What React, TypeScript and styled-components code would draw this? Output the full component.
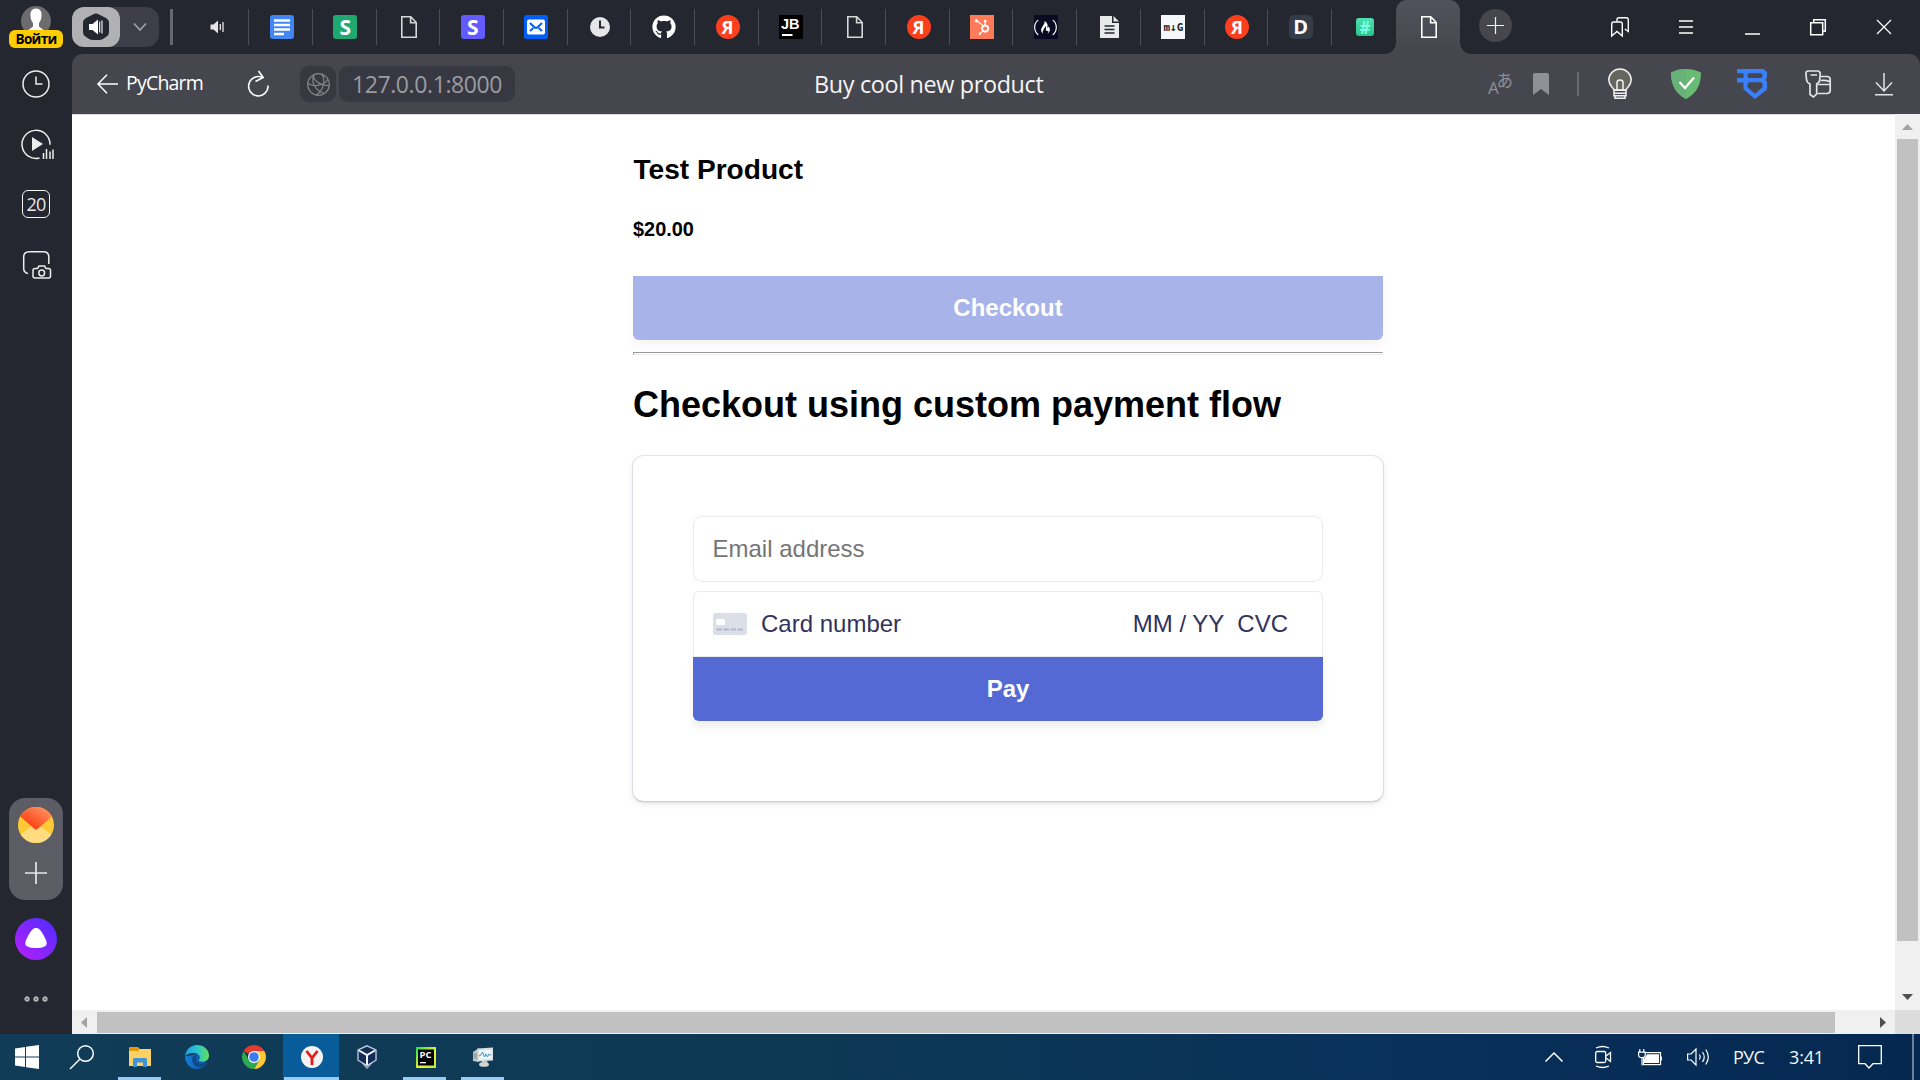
import React from "react";
import styled, { createGlobalStyle, css } from "styled-components";
import { FaGithub, FaHubspot, FaFreeCodeCamp } from "react-icons/fa";

const GlobalStyle = createGlobalStyle`
  *, *::before, *::after { box-sizing: border-box; }
  body { margin: 0; background: #242730; overflow: hidden; }
  svg { display: block; flex: none; overflow: visible; }
`;

const uiFont = css`
  font-family: "Open Sans", "Noto Sans", sans-serif;
`;

const Screen = styled.div`
  width: 1920px;
  height: 1080px;
  display: flex;
  flex-direction: column;
  background: #242730;
  ${uiFont}
`;

const Browser = styled.div`
  height: 1034px;
  display: flex;
`;

/* ---------- sidebar ---------- */

const Sidebar = styled.aside`
  width: 72px;
  display: flex;
  flex-direction: column;
  align-items: center;
  background: #242730;
`;

const Profile = styled.div`
  height: 54px;
  padding-top: 6px;
  display: flex;
  flex-direction: column;
  align-items: center;
`;

const LoginBadge = styled.div`
  width: 54px;
  height: 18px;
  margin-top: -6px;
  border-radius: 6px;
  background: #ffcc00;
  color: #000;
  font-size: 13.5px;
  line-height: 19px;
  font-weight: 700;
  letter-spacing: -0.7px;
  text-align: center;
  z-index: 1;
`;

const SideCell = styled.div<{ $h?: number }>`
  width: 72px;
  height: ${(p) => p.$h ?? 60}px;
  display: flex;
  align-items: center;
  justify-content: center;
`;

const CalendarBox = styled.div`
  width: 28px;
  height: 28px;
  border: 1.5px solid #f2f2f3;
  border-radius: 6px;
  color: #e8e8ea;
  font-size: 18px;
  line-height: 27px;
  text-align: center;
  letter-spacing: -0.8px;
`;

const ServicePill = styled.div`
  width: 54px;
  height: 102px;
  margin-top: auto;
  padding: 9px 0 16px;
  border-radius: 16px;
  background: #5b5c64;
  display: flex;
  flex-direction: column;
  align-items: center;
  justify-content: space-between;
`;

/* ---------- window chrome ---------- */

const Window = styled.div`
  flex: 1;
  display: flex;
  flex-direction: column;
`;

const TabStrip = styled.div`
  height: 54px;
  display: flex;
  align-items: center;
`;

const TabGroup = styled.div`
  width: 87px;
  height: 40px;
  border-radius: 13px;
  background: #3d3e48;
  display: flex;
  align-items: center;
`;

const GroupFace = styled.div`
  width: 48px;
  height: 40px;
  border-radius: 12px;
  background: #b1b1b4;
  display: flex;
  align-items: center;
  justify-content: center;
  margin-right: 13px;
`;

const GroupBar = styled.div`
  width: 3px;
  height: 36px;
  margin: 0 12.5px 0 11px;
  background: #66676f;
`;

const Tab = styled.div<{ $last?: boolean }>`
  width: 63.7px;
  height: 36px;
  padding-left: 2.4px;
  display: flex;
  align-items: center;
  justify-content: center;
  border-right: ${(p) => (p.$last ? "none" : "1.5px solid #4c4e57")};
`;

const ActiveTab = styled.div`
  position: relative;
  width: 64px;
  height: 54px;
  padding-left: 2px;
  border-radius: 11px 11px 0 0;
  background: linear-gradient(#52525c, #46464f);
  display: flex;
  align-items: center;
  justify-content: center;
  &::before,
  &::after {
    content: "";
    position: absolute;
    bottom: 0;
    width: 11px;
    height: 11px;
  }
  &::before {
    left: -11px;
    background: radial-gradient(circle at 0 0, transparent 10.5px, #46464f 11px);
  }
  &::after {
    right: -11px;
    background: radial-gradient(circle at 100% 0, transparent 10.5px, #46464f 11px);
  }
`;

const NewTab = styled.div`
  width: 33px;
  height: 33px;
  margin: 0 auto 3px 19px;
  border-radius: 50%;
  background: #46464f;
  display: flex;
  align-items: center;
  justify-content: center;
`;

const IconRun = styled.div`
  display: flex;
  align-items: center;
  padding-right: 3px;
`;

const IconCell = styled.div<{ $w?: number }>`
  width: ${(p) => p.$w ?? 66}px;
  display: flex;
  align-items: center;
  justify-content: center;
`;

const Toolbar = styled.div`
  height: 60px;
  border-radius: 11px 11px 0 0;
  background: #46464f;
  display: flex;
  align-items: center;
  padding-left: 25px;
`;

const BackLabel = styled.span`
  width: 119px;
  padding-left: 8px;
  color: #fff;
  font-size: 19.5px;
  line-height: 28px;
  letter-spacing: -0.8px;
  margin-bottom: 2px;
`;

const Site = styled.div<{ $w: number }>`
  width: ${(p) => p.$w}px;
  height: 36px;
  border-radius: 9px;
  background: #373841;
  color: #9b9ba1;
  display: flex;
  align-items: center;
  justify-content: center;
  font-size: 23px;
  letter-spacing: -0.4px;
  white-space: nowrap;
  margin-right: 3px;
`;

const PageTitle = styled.div`
  flex: 1;
  padding: 0 140px 0 0;
  color: #f4f4f5;
  font-size: 23.4px;
  letter-spacing: -0.35px;
  text-align: center;
`;

const ToolDivider = styled.div`
  width: 1.5px;
  height: 24px;
  margin: 0 8.5px 0 15.5px;
  background: #6b6b73;
`;

/* ---------- page area ---------- */

const View = styled.div`
  flex: 1;
  display: grid;
  grid-template-columns: 1fr 25px;
  grid-template-rows: 1fr 24px;
  background: #fff;
`;

const Page = styled.main`
  padding: 39px 0 0 561px;
  border-top: 1px solid #dcdcde;
  font-family: Arial, "Liberation Sans", sans-serif;
  color: #000;
`;

const Column = styled.div`
  width: 750px;
  display: flex;
  flex-direction: column;
`;

const ProductName = styled.h3`
  margin: 0 0 0 0.5px;
  font-size: 28.08px;
  line-height: 32px;
`;

const Price = styled.h5`
  margin: 32px 0 0;
  font-size: 19.92px;
  line-height: 23px;
`;

const SolidButton = styled.button<{ $faded?: boolean }>`
  width: 100%;
  height: 64px;
  flex: none;
  padding: 0;
  border: 0;
  border-radius: 0 0 6px 6px;
  background: #5469d4;
  color: #fff;
  font: 700 24px Arial, "Liberation Sans", sans-serif;
  box-shadow: 0 6px 8.25px rgba(0, 0, 0, 0.07);
  opacity: ${(p) => (p.$faded ? 0.5 : 1)};
`;

const CheckoutSlot = styled.div`
  height: 64px;
  margin-top: 35px;
`;

const Rule = styled.hr`
  width: 100%;
  height: 3px;
  margin: 12px 0 0;
  border: 1px solid;
  border-color: #9a9a9a #eee #eee #9a9a9a;
`;

const Heading = styled.h1`
  margin: 29px 0 31px;
  font-size: 36px;
  line-height: 41px;
`;

const PaymentForm = styled.form`
  height: 345px;
  padding: 60px 60px 0;
  border-radius: 10.5px;
  box-shadow: 0 0 0 1px rgba(50, 50, 93, 0.1), 0 3px 7.5px rgba(50, 50, 93, 0.1),
    0 1.5px 2.25px rgba(0, 0, 0, 0.07);
  display: flex;
  flex-direction: column;
`;

const EmailInput = styled.input`
  width: 100%;
  height: 66px;
  flex: none;
  margin: 0 0 9px;
  padding: 0 18.5px;
  border: 1px solid rgba(50, 50, 93, 0.1);
  border-radius: 9px;
  background: #fff;
  font: 24px Arial, "Liberation Sans", sans-serif;
  outline: none;
  &::placeholder {
    color: #757575;
    opacity: 1;
  }
`;

const CardField = styled.div`
  height: 66px;
  flex: none;
  padding: 0 34px 1px 19px;
  border: 1px solid rgba(50, 50, 93, 0.1);
  border-radius: 6px 6px 0 0;
  display: flex;
  align-items: center;
  color: #32325d;
  font-size: 24px;
  line-height: 28px;
`;

const CardNumber = styled.span`
  margin-left: 14px;
  flex: 1;
`;

const Expiry = styled.span`
  margin-right: 13px;
`;

const VScroll = styled.div`
  background: #f0f0f0;
  display: flex;
  flex-direction: column;
  align-items: center;
`;

const HScroll = styled.div`
  background: #f0f0f0;
  display: flex;
  align-items: center;
`;

const ScrollArrow = styled.div<{ $w: number; $h: number }>`
  width: ${(p) => p.$w}px;
  height: ${(p) => p.$h}px;
  display: flex;
  align-items: center;
  justify-content: center;
`;

const VThumb = styled.div`
  width: 21px;
  height: 802px;
  background: #c1c1c1;
  margin-bottom: auto;
`;

const HThumb = styled.div`
  width: 1738px;
  height: 21px;
  background: #c1c1c1;
  margin-right: auto;
`;

const Corner = styled.div`
  background: #dcdcdc;
`;

/* ---------- taskbar ---------- */

const Taskbar = styled.div`
  height: 46px;
  display: flex;
  background: linear-gradient(90deg, #103c57 0%, #0e3954 40%, #08305a 75%, #052850 100%);
`;

const TaskItem = styled.div<{ $w?: number; $active?: boolean; $open?: boolean }>`
  width: ${(p) => p.$w ?? 57}px;
  height: 46px;
  padding: 0 ${(p) => (p.$active ? 0 : 7)}px;
  display: flex;
  align-items: center;
  justify-content: center;
  background: ${(p) => (p.$active ? "#075c99" : "transparent")};
  background-clip: content-box;
  &::after {
    content: "";
    display: ${(p) => (p.$open ? "block" : "none")};
    flex: none;
    align-self: flex-end;
    width: ${(p) => (p.$active ? 55 : 43)}px;
    height: 3px;
    margin-left: -100%;
    background: #9acbf2;
  }
`;

const TaskGlyph = styled.div`
  flex: none;
  width: 100%;
  display: flex;
  justify-content: center;
`;

const Tray = styled.div`
  margin-left: auto;
  padding-right: 6px;
  display: flex;
  align-items: center;
`;

const TrayText = styled.span<{ $w: number; $sp?: number }>`
  width: ${(p) => p.$w}px;
  color: #f2f5f8;
  text-align: center;
  font-size: 18px;
  letter-spacing: ${(p) => p.$sp ?? -0.7}px;
`;

const DesktopEdge = styled.div`
  width: 2px;
  height: 46px;
  margin-left: 11px;
  background: #67819b;
`;

/* ---------- icons ---------- */

type GlyphProps = {
  w: number;
  h: number;
  c?: string;
  s?: number;
  children: React.ReactNode;
};

const Glyph = ({ w, h, c = "#fff", s = 1.5, children }: GlyphProps) => (
  <svg width={w} height={h} viewBox={`0 0 ${w} ${h}`} fill="none" stroke={c} strokeWidth={s}>
    {children}
  </svg>
);

const Tile = styled.div<{ $bg: string; $fg?: string; $size?: number; $r?: number; $font?: string; $h?: number }>`
  width: ${(p) => p.$h ?? 24}px;
  height: ${(p) => p.$h ?? 24}px;
  border-radius: ${(p) => p.$r ?? 0}px;
  background: ${(p) => p.$bg};
  color: ${(p) => p.$fg ?? "#fff"};
  font: 700 ${(p) => p.$size ?? 18}px/1 ${(p) => p.$font ?? '"Open Sans", sans-serif'};
  display: flex;
  align-items: center;
  justify-content: center;
`;

const Speaker = () => (
  <Glyph w={16} h={14} c="#e6e6e8" s={1.3}>
    <path d="M.5 4.500h3L8 .5v13l-4.500-4h-3z" fill="#e6e6e8" stroke="none" />
    <path d="M10.300 4v6M13 2v10" />
  </Glyph>
);

const FileIcon = ({ color = "#d6d6d8" }: { color?: string }) => (
  <Glyph w={16} h={22} c={color} s={1.6}>
    <path d="M.8.8h9l5.400 5.700v14.700H.8zM9.600 1v5.700H15" />
  </Glyph>
);

const Yandex = () => (
  <Tile $bg="#fc3f1d" $r={12} $size={18}>Я</Tile>
);

const ClockFilled = () => (
  <Glyph w={20} h={20} c="#242730" s={2}>
    <circle cx="10" cy="10" r="10" fill="#e6e6e8" stroke="none" />
    <path d="M10 3.500v7h4.500" />
  </Glyph>
);

const tabs: React.ReactNode[] = [
  <Speaker key="sp" />,
  <Glyph key="docs" w={24} h={24} c="#fff" s={2.4}>
    <rect width="24" height="24" rx="3" fill="#4285f4" stroke="none" />
    <path d="M4 5.500h16M4 10h16M4 14.500h16M4 19h10" />
  </Glyph>,
  <Tile key="s1" $bg="#1fa971" $r={3} $size={21}>S</Tile>,
  <FileIcon key="f1" />,
  <Tile key="s2" $bg="#635bff" $r={3} $size={21}>S</Tile>,
  <Glyph key="mail" w={24} h={24} c="#005ff9" s={2}>
    <rect width="24" height="24" rx="2.500" fill="#005ff9" stroke="none" />
    <rect x="3" y="4.500" width="18" height="15" rx="2" fill="#fff" stroke="none" />
    <path d="M6 8l4.200 4c1 1 2.600 1 3.600 0L18 8M6 16l3.300-3M18 16l-3.300-3" />
  </Glyph>,
  <ClockFilled key="clock" />,
  <FaGithub key="gh" size={24} color="#fff" />,
  <Yandex key="y1" />,
  <svg key="jb" width="24" height="24" viewBox="0 0 24 24">
    <rect width="24" height="24" fill="#000" />
    <text x="2" y="13.500" fontFamily="Liberation Sans, sans-serif" fontWeight="700" fontSize="14.500" fill="#fff">JB</text>
    <rect x="3" y="19" width="10.500" height="2" fill="#fff" />
  </svg>,
  <FileIcon key="f2" />,
  <Yandex key="y2" />,
  <Tile key="hs" $bg="#ff7a59"><FaHubspot size={16} /></Tile>,
  <Tile key="fc" $bg="#0a0a23"><FaFreeCodeCamp size={23} /></Tile>,
  <Glyph key="doc" w={19} h={22} c="#242730" s={1.7}>
    <path d="M0 0h12v7h7v15H0z" fill="#e9e9ea" stroke="none" />
    <path d="M13.500 0L19 5.500h-5.500z" fill="#e9e9ea" stroke="none" />
    <path d="M4.500 10h10M4.500 13.500h10M4.500 17h10" />
  </Glyph>,
  <Tile key="mg" $bg="#f6f7fa" $fg="#1d2433" $size={11} $font='"DejaVu Sans Mono", monospace'>m↓G</Tile>,
  <Yandex key="y3" />,
  <Tile key="d" $bg="#363b48" $r={5} $size={20}>D</Tile>,
  <Tile key="hash" $bg="linear-gradient(#4fe0b0, #27c48d)" $fg="#7dffe6" $r={3} $size={17} $h={18}>#</Tile>,
];

const Avatar = () => (
  <svg width="30" height="30" viewBox="0 0 30 30">
    <circle cx="15" cy="15" r="15" fill="#6c6c6d" />
    <path d="M15 2.500c-4 0-6 3-5.500 7.500.2 3 1 5 2.500 7v3.500L6 25l3 5h12l3-5-6-4.500V17c1.500-2 2.300-4 2.500-7C21 5.500 19 2.500 15 2.500z" fill="#fff" />
  </svg>
);

const Win = () => (
  <svg width="24" height="24" viewBox="0 0 24 24" fill="#fff">
    <path d="M0 3.400L10 2v9.500H0zM11 1.800L24 0v11.500H11zM0 12.500h10V22L0 20.600zM11 12.500h13V24l-13-1.800z" />
  </svg>
);

const Explorer = () => (
  <svg width="22" height="20" viewBox="0 0 22 20">
    <path d="M0 1q0-1 1-1h8l2 2v4H0z" fill="#e39b0c" />
    <path d="M0 4h9l2-2h11v17H0z" fill="#fdd264" />
    <path d="M4 20v-7.500q0-1.500 1.500-1.500h11q1.500 0 1.500 1.500V20h-4v-4.500H8V20z" fill="#3f93d8" />
  </svg>
);

const Edge = () => (
  <svg width="24" height="24" viewBox="0 0 24 24">
    <defs>
      <linearGradient id="edgeTop" x1="0" x2="1"><stop offset="0" stopColor="#1f9be6" /><stop offset=".5" stopColor="#2cc3d2" /><stop offset="1" stopColor="#62df58" /></linearGradient>
      <linearGradient id="edgeLow" x1="0" x2="1"><stop offset="0" stopColor="#1380d8" /><stop offset="1" stopColor="#0b4c98" /></linearGradient>
    </defs>
    <path d="M0 11.500C0 18 5 24 12 24c4.500 0 8.500-2.300 10.500-6L13 14l4-6z" fill="url(#edgeLow)" />
    <path d="M0 11.500C.5 5 5.500 0 12 0c7 0 12 5 12 10.500 0 4-3 6.300-6.500 6.300-3 0-4.300-1.300-3.500-2.300 1.800-2.500 0-6.500-4.500-6.500C5 8 1 9.500 0 11.500z" fill="url(#edgeTop)" />
    <path d="M9 10c-4 4-1.500 11.500 5 12 4 .3 7-1.700 8.500-4.500-4 2-8.500 1.500-10.500-1-1.500-2-1-4.500.500-6z" fill="#114a8b" />
  </svg>
);

const Chrome = () => (
  <svg width="24" height="24" viewBox="0 0 24 24">
    <path d="M12 12L1.610 6A12 12 0 0 1 22.390 6z" fill="#e33b2e" />
    <path d="M12 6H22.390A12 12 0 0 1 12 24l5.200-9z" fill="#fcc934" />
    <path d="M6.800 15L1.610 6A12 12 0 0 0 12 24l5.200-9-5.200 3z" fill="#2da94f" />
    <circle cx="12" cy="12" r="6" fill="#fff" />
    <circle cx="12" cy="12" r="4.800" fill="#3b7ded" />
  </svg>
);

const YandexBrowser = () => (
  <svg width="22" height="22" viewBox="0 0 22 22">
    <circle cx="11" cy="11" r="11" fill="#f3f3f4" />
    <path d="M5.500 5l5.500 7 5.500-7M11 11.500V19" stroke="#e21a1a" strokeWidth="2.800" fill="none" />
  </svg>
);

const VirtualBox = () => (
  <svg width="20" height="24" viewBox="0 0 20 24">
    <path d="M5 18l5 5.500 5-5.500z" fill="#8191ad" stroke="#b8c3d6" />
    <path d="M10 .8l9 4v10.400L10 20.500l-9-5.300V4.800z" fill="#142b58" stroke="#c5cfdf" strokeWidth="1.300" />
    <path d="M2 5.500l8 4.500 8-4.500M10 10v10" stroke="#f2f5fa" strokeWidth="2" fill="none" />
  </svg>
);

const PyCharm = () => (
  <svg width="20" height="21" viewBox="0 0 20 21">
    <defs><linearGradient id="pc" x1="0" y1="0" x2="1" y2="1"><stop offset="0" stopColor="#21d75f" /><stop offset=".25" stopColor="#7eea3a" /><stop offset=".6" stopColor="#f4f03c" /><stop offset="1" stopColor="#b6e83e" /></linearGradient></defs>
    <rect width="20" height="21" fill="url(#pc)" />
    <rect x="2" y="2.500" width="16" height="16" fill="#000" />
    <text x="3.600" y="10.500" fontFamily="Open Sans, sans-serif" fontWeight="700" fontSize="9.500" fill="#fff">PC</text>
    <rect x="4" y="15" width="6" height="1.300" fill="#fff" />
  </svg>
);

const Monitor = () => (
  <svg width="22" height="20" viewBox="0 0 22 20">
    <path d="M1 5l6-4v14l-6-1z" fill="#c2c6c8" />
    <path d="M1.500 7h4M1.500 9h4M1.500 11h4" stroke="#7d8488" />
    <path d="M5.500 1.500L21 .5v13l-15.500 1z" fill="#d8dde0" />
    <path d="M7 3.300l12.500-.8v9.500l-12.500.8z" fill="#eef5f9" />
    <path d="M7 9l2-1 1.500-3 2 5 1.500-3 1.500 3L17 7l2 1.500" stroke="#3d92bd" fill="none" />
    <path d="M10 14h5l1 2.500h-7z" fill="#bfc4c7" />
    <ellipse cx="12" cy="17.500" rx="5" ry="2.300" fill="#d2d5d6" />
  </svg>
);

const ShieldB = () => (
  <svg width="30" height="30" viewBox="0 0 30 30">
    <path
      fillRule="evenodd"
      fill="#3a80fa"
      d="M0 0h26.500L30 3.300v5l-1.500 2.400L30 13v7.500L18 30 6.500 20.500v-7H0V9h6.500V4.200H0zM12 4.200q-1.500 0-1.500 2.300T12 9h12q1.500 0 1.500-2.500T24 4.200zM12 13.200l-1.500 1.500v3.600l7.500 6.500 7.500-6.500v-3.600L24 13.200z"
    />
  </svg>
);

export default function App() {
  return (
    <Screen>
      <GlobalStyle />
      <Browser>
        <Sidebar>
          <Profile>
            <Avatar />
            <LoginBadge>Войти</LoginBadge>
          </Profile>
          <SideCell>
            <Glyph w={28} h={28} c="#ededee">
              <circle cx="14" cy="14" r="13" />
              <path d="M14 6.500V14h6.500" />
            </Glyph>
          </SideCell>
          <SideCell>
            <Glyph w={30} h={30} c="#ededee">
              <path d="M18.500 28.900A14 14 0 1 1 29 15.700" />
              <path d="M11 8l11 7-11 7z" fill="#ededee" stroke="none" />
              <path d="M22.500 24v6M25.500 20v10M29 22.500v7.500M32 20.500v9.500" />
            </Glyph>
          </SideCell>
          <SideCell>
            <CalendarBox>20</CalendarBox>
          </SideCell>
          <SideCell>
            <Glyph w={27} h={27} c="#ededee">
              <path d="M5 22.500Q.7 21.500 .7 17.500V6Q.7.7 6 .7h14.500q5.300 0 5.300 5.300v7" />
              <path d="M12 17.500h2.500L16 15h5.500l1.500 2.500h2.500q2 0 2 2V25q0 2-2 2H12q-2 0-2-2v-5.500q0-2 2-2z" />
              <circle cx="18.700" cy="22" r="2.900" />
            </Glyph>
          </SideCell>
          <ServicePill>
            <svg width="36" height="36" viewBox="0 0 36 36">
              <defs>
                <clipPath id="disc"><circle cx="18" cy="18" r="18" /></clipPath>
                <linearGradient id="flap" x1="0" y1="1" x2="1" y2="0"><stop offset=".3" stopColor="#ff4a1c" /><stop offset="1" stopColor="#ffa070" /></linearGradient>
              </defs>
              <g clipPath="url(#disc)">
                <rect width="36" height="36" fill="#fdc935" />
                <path d="M0 29.500L18 16l18 13.500V36H0z" fill="#ffdc80" />
                <path d="M0 7.500l16.500 14.500q1.500 1.300 3 0L36 7.500V0H0z" fill="url(#flap)" />
              </g>
            </svg>
            <Glyph w={22} h={22} c="#e6e6e8" s={1.7}>
              <path d="M11 0v22M0 11h22" />
            </Glyph>
          </ServicePill>
          <SideCell $h={78}>
            <svg width="42" height="42" viewBox="0 0 42 42">
              <defs><linearGradient id="alice" x1="0" y1="1" x2="1" y2="0"><stop offset="0" stopColor="#b91fff" /><stop offset="1" stopColor="#4b2dff" /></linearGradient></defs>
              <circle cx="21" cy="21" r="21" fill="url(#alice)" />
              <path d="M21 10c3 0 5 2.500 8 8 3.500 6.500 3.500 9 .5 10.500-4 2-13 2-17 0-3-1.500-3-4 .5-10.500 3-5.500 5-8 8-8z" fill="#fff" />
            </svg>
          </SideCell>
          <SideCell $h={42}>
            <Glyph w={24} h={6} c="#b4b5b9" s={1.900}>
              <circle cx="3" cy="3" r="1.700" /><circle cx="12" cy="3" r="1.700" /><circle cx="21" cy="3" r="1.700" />
            </Glyph>
          </SideCell>
          <SideCell $h={14} />
        </Sidebar>

        <Window>
          <TabStrip>
            <TabGroup>
              <GroupFace>
                <svg width="26" height="28" viewBox="0 0 26 28">
                  <path d="M10 1.400q3-1.700 6 0l6.500 3.400Q26 6.500 26 10v9q0 3.500-3.500 5.300L20 26q-2 1-4 1h-6q-2 0-4-1l-2.500-1.700Q0 22.500 0 19v-9q0-3.500 3.500-5.200z" fill="#242730" />
                  <path d="M6 11h3.500L15 6.500v15L9.500 17H6z" fill="#fff" />
                  <path d="M16.700 8.500v11M19 7.500v13" stroke="#fff" strokeWidth="1.100" />
                </svg>
              </GroupFace>
              <Glyph w={14} h={8} c="#9c9ca3" s={1.8}><path d="M1 .5l6 6.500 6-6.500" /></Glyph>
            </TabGroup>
            <GroupBar />
            {tabs.map((icon, i) => (
              <Tab key={i} $last={i === tabs.length - 1}>{icon}</Tab>
            ))}
            <ActiveTab><FileIcon color="#fff" /></ActiveTab>
            <NewTab>
              <Glyph w={17} h={17} c="#f2f2f3" s={1.200}><path d="M8.500 0v17M0 8.500h17" /></Glyph>
            </NewTab>
            <IconRun>
              <IconCell>
                <Glyph w={18} h={20} s={1.400}>
                  <path d="M.7 19V7q0-2 2-2h6.600q2 0 2 2v12L6 14.500z" />
                  <path d="M6 4.500V2.700q0-2 2-2h7.300q2 0 2 2V14.500l-3.500-2.500" />
                </Glyph>
              </IconCell>
              <IconCell><Glyph w={14} h={14}><path d="M0 1h14M0 7h14M0 13h14" /></Glyph></IconCell>
              <IconCell><Glyph w={15} h={16}><path d="M0 15h15" /></Glyph></IconCell>
              <IconCell><Glyph w={16} h={16}><path d="M.7 3.700h12v12H.7zM3.700 3V.7h11.600v11.600H13" /></Glyph></IconCell>
              <IconCell><Glyph w={14} h={14} s={1.200}><path d="M0 0l14 14M14 0L0 14" /></Glyph></IconCell>
            </IconRun>
          </TabStrip>

          <Toolbar>
            <Glyph w={21} h={20}><path d="M21 10H1M10 .7L1 10l9 9.300" /></Glyph>
            <BackLabel>PyCharm</BackLabel>
            <IconCell $w={41}>
              <Glyph w={22} h={26} s={1.600}>
                <path d="M21 14.500A9.700 9.700 0 1 1 15.500 6.500" />
                <path d="M11.500 0l4.700 6.500-7.700 4" />
              </Glyph>
            </IconCell>
            <IconCell $w={22} />
            <Site $w={36}>
              <Glyph w={23} h={23} c="#85858c" s={1.2}>
                <circle cx="11.500" cy="11.500" r="10.800" />
                <path d="M7 1.700C3.500 8 8 18 17.500 20.500M14.500 1.200C19 6 17 17 9 22M1 9.500C4 14.500 17 13 21 6.500M7 1.700C5 6 12 12.500 22.300 12.500" />
              </Glyph>
            </Site>
            <Site $w={176}>127.0.0.1:8000</Site>
            <PageTitle>Buy cool new product</PageTitle>
            <IconRun>
              <IconCell $w={41}>
                <svg width="24" height="24" viewBox="0 0 24 24" fill="#909096">
                  <text x="0" y="22" fontFamily="Open Sans, sans-serif" fontSize="17">A</text>
                  <text x="8.500" y="14.500" fontFamily="Noto Sans CJK JP, sans-serif" fontSize="16.500">あ</text>
                </svg>
              </IconCell>
              <IconCell $w={41}>
                <svg width="16" height="22" viewBox="0 0 16 22"><path d="M0 2q0-2 2-2h12q2 0 2 2v20l-8-6-8 6z" fill="#909096" /></svg>
              </IconCell>
              <ToolDivider />
              <IconCell>
                <Glyph w={24} h={30} c="#f2f2f3" s={1.500}>
                  <path d="M6 21C5 18.500.8 16.500.8 11a11.200 11 0 0 1 22.400 0c0 5.500-4.200 7.500-5.200 10z" fill="#66665f" />
                  <path d="M9 21v-7.500q0-2.500 3-2.500t3 2.500V21M6 21.200h12v3H6zM6 24.200v2.500h12v-2.500M7 26.700h10v2.500H7z" />
                </Glyph>
              </IconCell>
              <IconCell>
                <svg width="30" height="30" viewBox="0 0 30 30">
                  <path d="M15 0c5 0 10 1 15 3.500 0 12-4 20.500-15 26.500C4 24 0 15.500 0 3.500 5 1 10 0 15 0z" fill="#68bc71" />
                  <path d="M15 0v30C4 24 0 15.500 0 3.500 5 1 10 0 15 0z" fill="#67b279" />
                  <path d="M8.500 13l5.500 6 9-10.500" stroke="#fff" strokeWidth="2.200" fill="none" />
                </svg>
              </IconCell>
              <IconCell><ShieldB /></IconCell>
              <IconCell>
                <Glyph w={26} h={28} c="#e4e4e6" s={1.700}>
                  <path d="M3.500 1h9q2.700 0 2.700 2.700L14.700 10q-.2 2.700-3 3.800v10L8.500 27 5 24.500V14Q2 12.800 1.600 10L.9 3.700Q.9 1 3.500 1zM5.500 5h6.500" />
                  <path d="M16 6.500h6q3.200 0 3.200 3.200v10.600q0 3.200-3.200 3.200h-9.500M15.500 10.500q6-.5 9 1M12.500 14.500H25" />
                </Glyph>
              </IconCell>
              <IconCell><Glyph w={18} h={24} c="#e4e4e6"><path d="M9 1v18M1 10.500l8 8.500 8-8.500M0 22.700h18" /></Glyph></IconCell>
            </IconRun>
          </Toolbar>

          <View>
            <Page>
              <Column>
                <ProductName>Test Product</ProductName>
                <Price>$20.00</Price>
                <CheckoutSlot><SolidButton $faded>Checkout</SolidButton></CheckoutSlot>
                <Rule />
                <Heading>Checkout using custom payment flow</Heading>
                <PaymentForm>
                  <EmailInput placeholder="Email address" />
                  <CardField>
                    <svg width="34" height="22" viewBox="0 0 34 22">
                      <rect width="34" height="22" rx="2.500" fill="#dcdfe8" />
                      <rect x="3.300" y="6" width="8.700" height="6" rx="1" fill="#fff" />
                      <path d="M3.500 16.500h5.500M10.500 16.500H16M17.500 16.500H23M24.500 16.500H30" stroke="#b9bfcd" strokeWidth="2.400" />
                    </svg>
                    <CardNumber>Card number</CardNumber>
                    <Expiry>MM / YY</Expiry>
                    <span>CVC</span>
                  </CardField>
                  <SolidButton type="button">Pay</SolidButton>
                </PaymentForm>
              </Column>
            </Page>
            <VScroll>
              <ScrollArrow $w={25} $h={25}><svg width="11" height="6" viewBox="0 0 11 6"><path d="M0 6L5.500 0 11 6z" fill="#a3a3a3" /></svg></ScrollArrow>
              <VThumb />
              <ScrollArrow $w={25} $h={26}><svg width="11" height="6" viewBox="0 0 11 6"><path d="M0 0l5.500 6L11 0z" fill="#505050" /></svg></ScrollArrow>
            </VScroll>
            <HScroll>
              <ScrollArrow $w={25} $h={24}><svg width="6" height="11" viewBox="0 0 6 11"><path d="M5 0L-1 5.500 5 11z" fill="#a3a3a3" /></svg></ScrollArrow>
              <HThumb />
              <ScrollArrow $w={25} $h={24}><svg width="6" height="11" viewBox="0 0 6 11"><path d="M0 0l6 5.500L0 11z" fill="#505050" /></svg></ScrollArrow>
            </HScroll>
            <Corner />
          </View>
        </Window>
      </Browser>

      <Taskbar>
        <TaskItem $w={54}><TaskGlyph><Win /></TaskGlyph></TaskItem>
        <TaskItem $w={57}>
          <TaskGlyph><Glyph w={25} h={24}><circle cx="15.500" cy="8.500" r="7.800" /><path d="M10 14L0 24" /></Glyph></TaskGlyph>
        </TaskItem>
        <TaskItem $w={57} $open><TaskGlyph><Explorer /></TaskGlyph></TaskItem>
        <TaskItem $w={57}><TaskGlyph><Edge /></TaskGlyph></TaskItem>
        <TaskItem $w={58}><TaskGlyph><Chrome /></TaskGlyph></TaskItem>
        <TaskItem $w={56} $open $active><TaskGlyph><YandexBrowser /></TaskGlyph></TaskItem>
        <TaskItem $w={56}><TaskGlyph><VirtualBox /></TaskGlyph></TaskItem>
        <TaskItem $w={59} $open><TaskGlyph><PyCharm /></TaskGlyph></TaskItem>
        <TaskItem $w={57} $open><TaskGlyph><Monitor /></TaskGlyph></TaskItem>
        <Tray>
          <IconCell $w={50}><Glyph w={18} h={10}><path d="M.5 9.500L9 1l8.500 8.500" /></Glyph></IconCell>
          <IconCell $w={48}>
            <Glyph w={16} h={22} s={1.300}>
              <rect x=".7" y="5.500" width="10" height="11" rx="1.500" />
              <path d="M11 10l4.500-3.500v9L11 12M1 2q6.500-3 13 0M1 20q6.500 3 13 0" />
            </Glyph>
          </IconCell>
          <IconCell $w={46}>
            <Glyph w={24} h={17} s={1.200}>
              <rect x="5.500" y="3.600" width="17" height="12" />
              <path d="M9 5.200h12v8.800H5.500V11z" fill="#fff" stroke="none" />
              <path d="M23.300 7.500v4" />
              <path d="M1.800 0v3M5.800 0v3M.6 3.200h6.600v3q0 2.500-3.300 2.500T.6 6.200zM4 9v7.500" fill="#08305a" />
            </Glyph>
          </IconCell>
          <IconCell $w={50}>
            <Glyph w={23} h={18} s={1.200}>
              <path d="M.6 6h3.500L9 1v16l-4.900-5H.6z" />
              <path d="M12.500 6.500q1.500 2.500 0 5M15.500 4q3.500 5 0 10M18.800 1.500q5 7.500 0 15" />
            </Glyph>
          </IconCell>
          <TrayText $w={51}>РУС</TrayText>
          <TrayText $w={65} $sp={-0.2}>3:41</TrayText>
          <IconCell $w={62}><Glyph w={24} h={24} s={1.300}><path d="M.7.700h22.600v18H15l-4 4.300-4-4.300H.7z" /></Glyph></IconCell>
          <DesktopEdge />
        </Tray>
      </Taskbar>
    </Screen>
  );
}
